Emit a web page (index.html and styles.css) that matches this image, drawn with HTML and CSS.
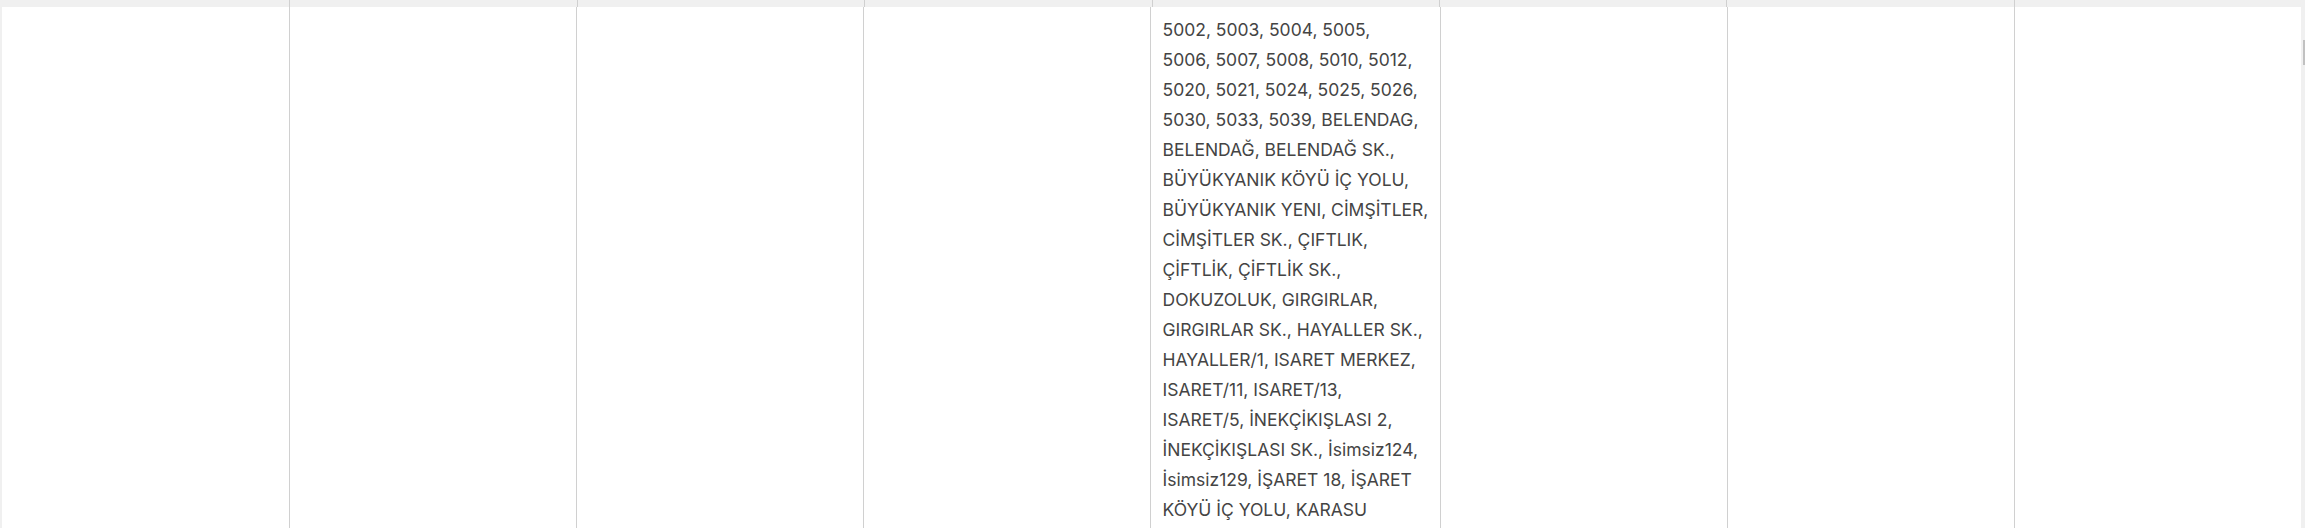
FILE: index.html
```html
<!DOCTYPE html>
<html lang="tr">
<head>
    <meta charset="UTF-8">
    <meta name="viewport" content="width=device-width, initial-scale=1.0">
    <title>Adresler</title>
    <link rel="stylesheet" href="styles.css">
</head>
<body>

<div class="page">
    <div class="table-wrap">
        <!-- header row, scrolled mostly out of view -->
        <div class="grid-row head-row">
            <div class="cell"></div>
            <div class="cell"></div>
            <div class="cell"></div>
            <div class="cell"></div>
            <div class="cell"></div>
            <div class="cell"></div>
            <div class="cell"></div>
            <div class="cell"></div>
        </div>
        <div class="grid-row body-row">
            <div class="cell"></div>
            <div class="cell"></div>
            <div class="cell"></div>
            <div class="cell"></div>
            <div class="cell text-cell">
                5002, 5003, 5004, 5005,<br>
                5006, 5007, 5008, 5010, 5012,<br>
                5020, 5021, 5024, 5025, 5026,<br>
                5030, 5033, 5039, BELENDAG,<br>
                BELENDAĞ, BELENDAĞ SK.,<br>
                BÜYÜKYANIK KÖYÜ İÇ YOLU,<br>
                BÜYÜKYANIK YENI, CİMŞİTLER,<br>
                CİMŞİTLER SK., ÇIFTLIK,<br>
                ÇİFTLİK, ÇİFTLİK SK.,<br>
                DOKUZOLUK, GIRGIRLAR,<br>
                GIRGIRLAR SK., HAYALLER SK.,<br>
                HAYALLER/1, ISARET MERKEZ,<br>
                ISARET/11, ISARET/13,<br>
                ISARET/5, İNEKÇİKIŞLASI 2,<br>
                İNEKÇİKIŞLASI SK., İsimsiz124,<br>
                İsimsiz129, İŞARET 18, İŞARET<br>
                KÖYÜ İÇ YOLU, KARASU<br>
                MEVKİİ, KARASU SK., KÖY İÇİ,<br>
                MERKEZ, ORTA MAH.
            </div>
            <div class="cell"></div>
            <div class="cell"></div>
            <div class="cell"></div>
        </div>
    </div>

    <!-- thin scrollbar -->
    <div class="scroll-track">
        <div class="scroll-thumb"></div>
    </div>
</div>

</body>
</html>
```

FILE: styles.css
```css
body {
    font-family: 'Inter', 'Noto Sans', sans-serif;
    background-color: #f0f0f0;
    margin: 0;
    height: 528px;
    overflow: hidden;
}

.page {
    display: flex;
    height: 528px;
    padding-left: 2px;
}

.table-wrap {
    flex: 1;
    height: 528px;
    overflow: hidden;
    background-color: #fff;
}

.grid-row {
    display: grid;
    grid-template-columns: repeat(8, 1fr);
}

.head-row {
    height: 7px;
    background-color: #f0f0f0;
}

.body-row {
    min-height: 521px;
}

.cell {
    border-left: 1px solid #d0d0d0;
}

.cell:first-child {
    border-left: none;
}

.text-cell {
    padding: 8px 12px 0 12px;
    font-size: 17.5px;
    line-height: 30px;
    color: #444;
    white-space: nowrap;
}

.scroll-track {
    width: 4px;
    background-color: #f0f0f0;
}

.scroll-thumb {
    margin-top: 40px;
    margin-left: 2px;
    width: 2px;
    height: 25px;
    background-color: #c1c1c1;
}
```
